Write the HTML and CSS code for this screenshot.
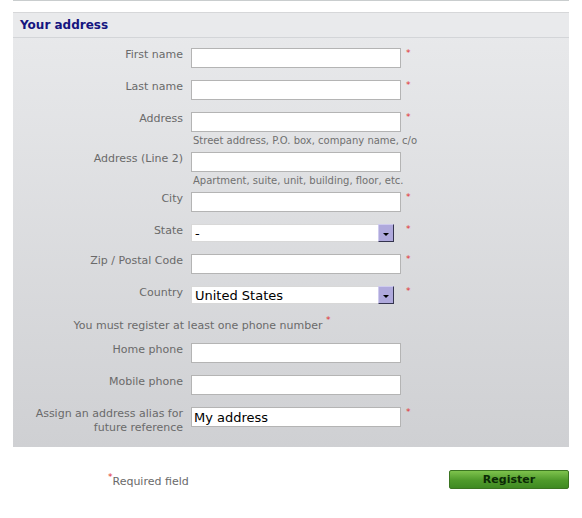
FILE: index.html
```html
<!DOCTYPE html>
<html lang="en">
<head>
    <meta charset="UTF-8">
    <title>Your address</title>
    <link rel="stylesheet" href="styles.css">
</head>
<body>
    <div class="page">
        <div class="topline"></div>

        <form class="panel">
            <h3 class="panel-title">Your address</h3>
            <div class="panel-body">
                <div class="row">
                    <label for="firstname">First name</label>
                    <input type="text" id="firstname">
                    <span class="req">*</span>
                </div>
                <div class="row">
                    <label for="lastname">Last name</label>
                    <input type="text" id="lastname">
                    <span class="req">*</span>
                </div>
                <div class="row hint-row">
                    <label for="address1">Address</label>
                    <div class="field">
                        <input type="text" id="address1">
                        <div class="hint">Street address, P.O. box, company name, c/o</div>
                    </div>
                    <span class="req">*</span>
                </div>
                <div class="row hint-row">
                    <label for="address2">Address (Line 2)</label>
                    <div class="field">
                        <input type="text" id="address2">
                        <div class="hint">Apartment, suite, unit, building, floor, etc.</div>
                    </div>
                    <span class="req"></span>
                </div>
                <div class="row">
                    <label for="city">City</label>
                    <input type="text" id="city">
                    <span class="req">*</span>
                </div>
                <div class="row">
                    <label for="state">State</label>
                    <div class="select">
                        <select id="state">
                            <option>-</option>
                        </select>
                        <span class="select-btn"></span>
                    </div>
                    <span class="req">*</span>
                </div>
                <div class="row">
                    <label for="zip">Zip / Postal Code</label>
                    <input type="text" id="zip">
                    <span class="req">*</span>
                </div>
                <div class="row">
                    <label for="country">Country</label>
                    <div class="select">
                        <select id="country">
                            <option>United States</option>
                        </select>
                        <span class="select-btn"></span>
                    </div>
                    <span class="req">*</span>
                </div>
                <p class="phone-note">You must register at least one phone number <span class="req">*</span></p>
                <div class="row">
                    <label for="phone">Home phone</label>
                    <input type="text" id="phone">
                    <span class="req"></span>
                </div>
                <div class="row">
                    <label for="mobile">Mobile phone</label>
                    <input type="text" id="mobile">
                    <span class="req"></span>
                </div>
                <div class="row last">
                    <label for="alias">Assign an address alias for future reference</label>
                    <input type="text" id="alias" value="My address">
                    <span class="req">*</span>
                </div>
            </div>
        </form>

        <div class="footer">
            <p class="required"><span class="req">*</span>Required field</p>
            <button type="button" class="register">Register</button>
        </div>
    </div>
</body>
</html>
```

FILE: styles.css
```css
body {
    margin: 0;
    background-color: #fff;
    font-family: "DejaVu Sans", Verdana, sans-serif;
    font-size: 11px;
    color: #666;
}

.page {
    width: 556px;
    margin-left: 13px;
}

.topline {
    height: 1px;
    background-color: #c9cdce;
}

.panel {
    margin-top: 11px;
    background: linear-gradient(#e9eaec, #cfd0d3);
    border-top: 1px solid #d6d7d9;
}

.panel-title {
    margin: 0;
    height: 24px;
    padding-left: 7px;
    line-height: 24px;
    font-size: 12px;
    font-weight: bold;
    color: #15157f;
    background-color: #e9eaec;
    border-bottom: 1px solid #d3d5d8;
}

.panel-body {
    padding: 10px 0 12px 0;
}

.row {
    display: grid;
    grid-template-columns: 170px 210px 1fr;
    column-gap: 8px;
    align-items: start;
    margin-bottom: 12px;
}

.row.last {
    margin-bottom: 0;
}

.row label {
    text-align: right;
    line-height: 14px;
    color: #6a6a6a;
}

.row input {
    box-sizing: border-box;
    width: 210px;
    height: 20px;
    margin: 0;
    padding: 1px 2px;
    border: 1px solid #b4b4b4;
    background-color: #fff;
    font-family: "DejaVu Sans", Verdana, sans-serif;
    font-size: 13px;
    color: #000;
}

.hint-row {
    margin-bottom: 4px;
}

.hint {
    margin-top: 2px;
    padding-left: 2px;
    line-height: 14px;
    font-size: 10px;
    color: #707070;
    white-space: nowrap;
}

.select {
    position: relative;
    width: 203px;
    height: 18px;
}

.select select {
    appearance: none;
    box-sizing: border-box;
    width: 203px;
    height: 18px;
    margin: 0;
    padding: 0 3px;
    border: 1px solid #d8d8d8;
    border-radius: 0;
    background-color: #fff;
    font-family: "DejaVu Sans", Verdana, sans-serif;
    font-size: 13px;
    color: #000;
}

.select-btn {
    position: absolute;
    top: 0;
    right: 0;
    box-sizing: border-box;
    width: 16px;
    height: 18px;
    background-color: #afa9dc;
    border: 1px solid #34344e;
    border-top-color: #cfcbee;
    border-left-color: #cfcbee;
}

.select-btn::after {
    content: "";
    position: absolute;
    left: 4px;
    top: 8px;
    border-left: 3px solid transparent;
    border-right: 3px solid transparent;
    border-top: 3px solid #000;
}

.req {
    color: #e03030;
    font-size: 9px;
    line-height: 9px;
    margin-left: -3px;
}

.row .req {
    padding-top: 1px;
}

.phone-note {
    width: 388px;
    margin: 5px 0 10px 0;
    padding-right: 10px;
    box-sizing: border-box;
    text-align: center;
    line-height: 14px;
    color: #6a6a6a;
}

.phone-note .req {
    vertical-align: 6px;
    margin-left: 0;
}

.footer {
    display: flex;
    justify-content: space-between;
    align-items: center;
    margin-top: 23px;
}

.required {
    margin: 0 0 0 95px;
    padding-top: 2px;
    color: #6a6a6a;
}

.required .req {
    vertical-align: 5px;
    margin-left: 0;
}

.register {
    width: 120px;
    height: 19px;
    padding: 0;
    border: 1px solid #3b7521;
    border-radius: 2px;
    background: linear-gradient(#7ec34d, #4f9a2b 55%, #3f8a22);
    font-family: "DejaVu Sans", Verdana, sans-serif;
    font-size: 11px;
    font-weight: bold;
    color: #0b2a05;
    cursor: pointer;
}
```
